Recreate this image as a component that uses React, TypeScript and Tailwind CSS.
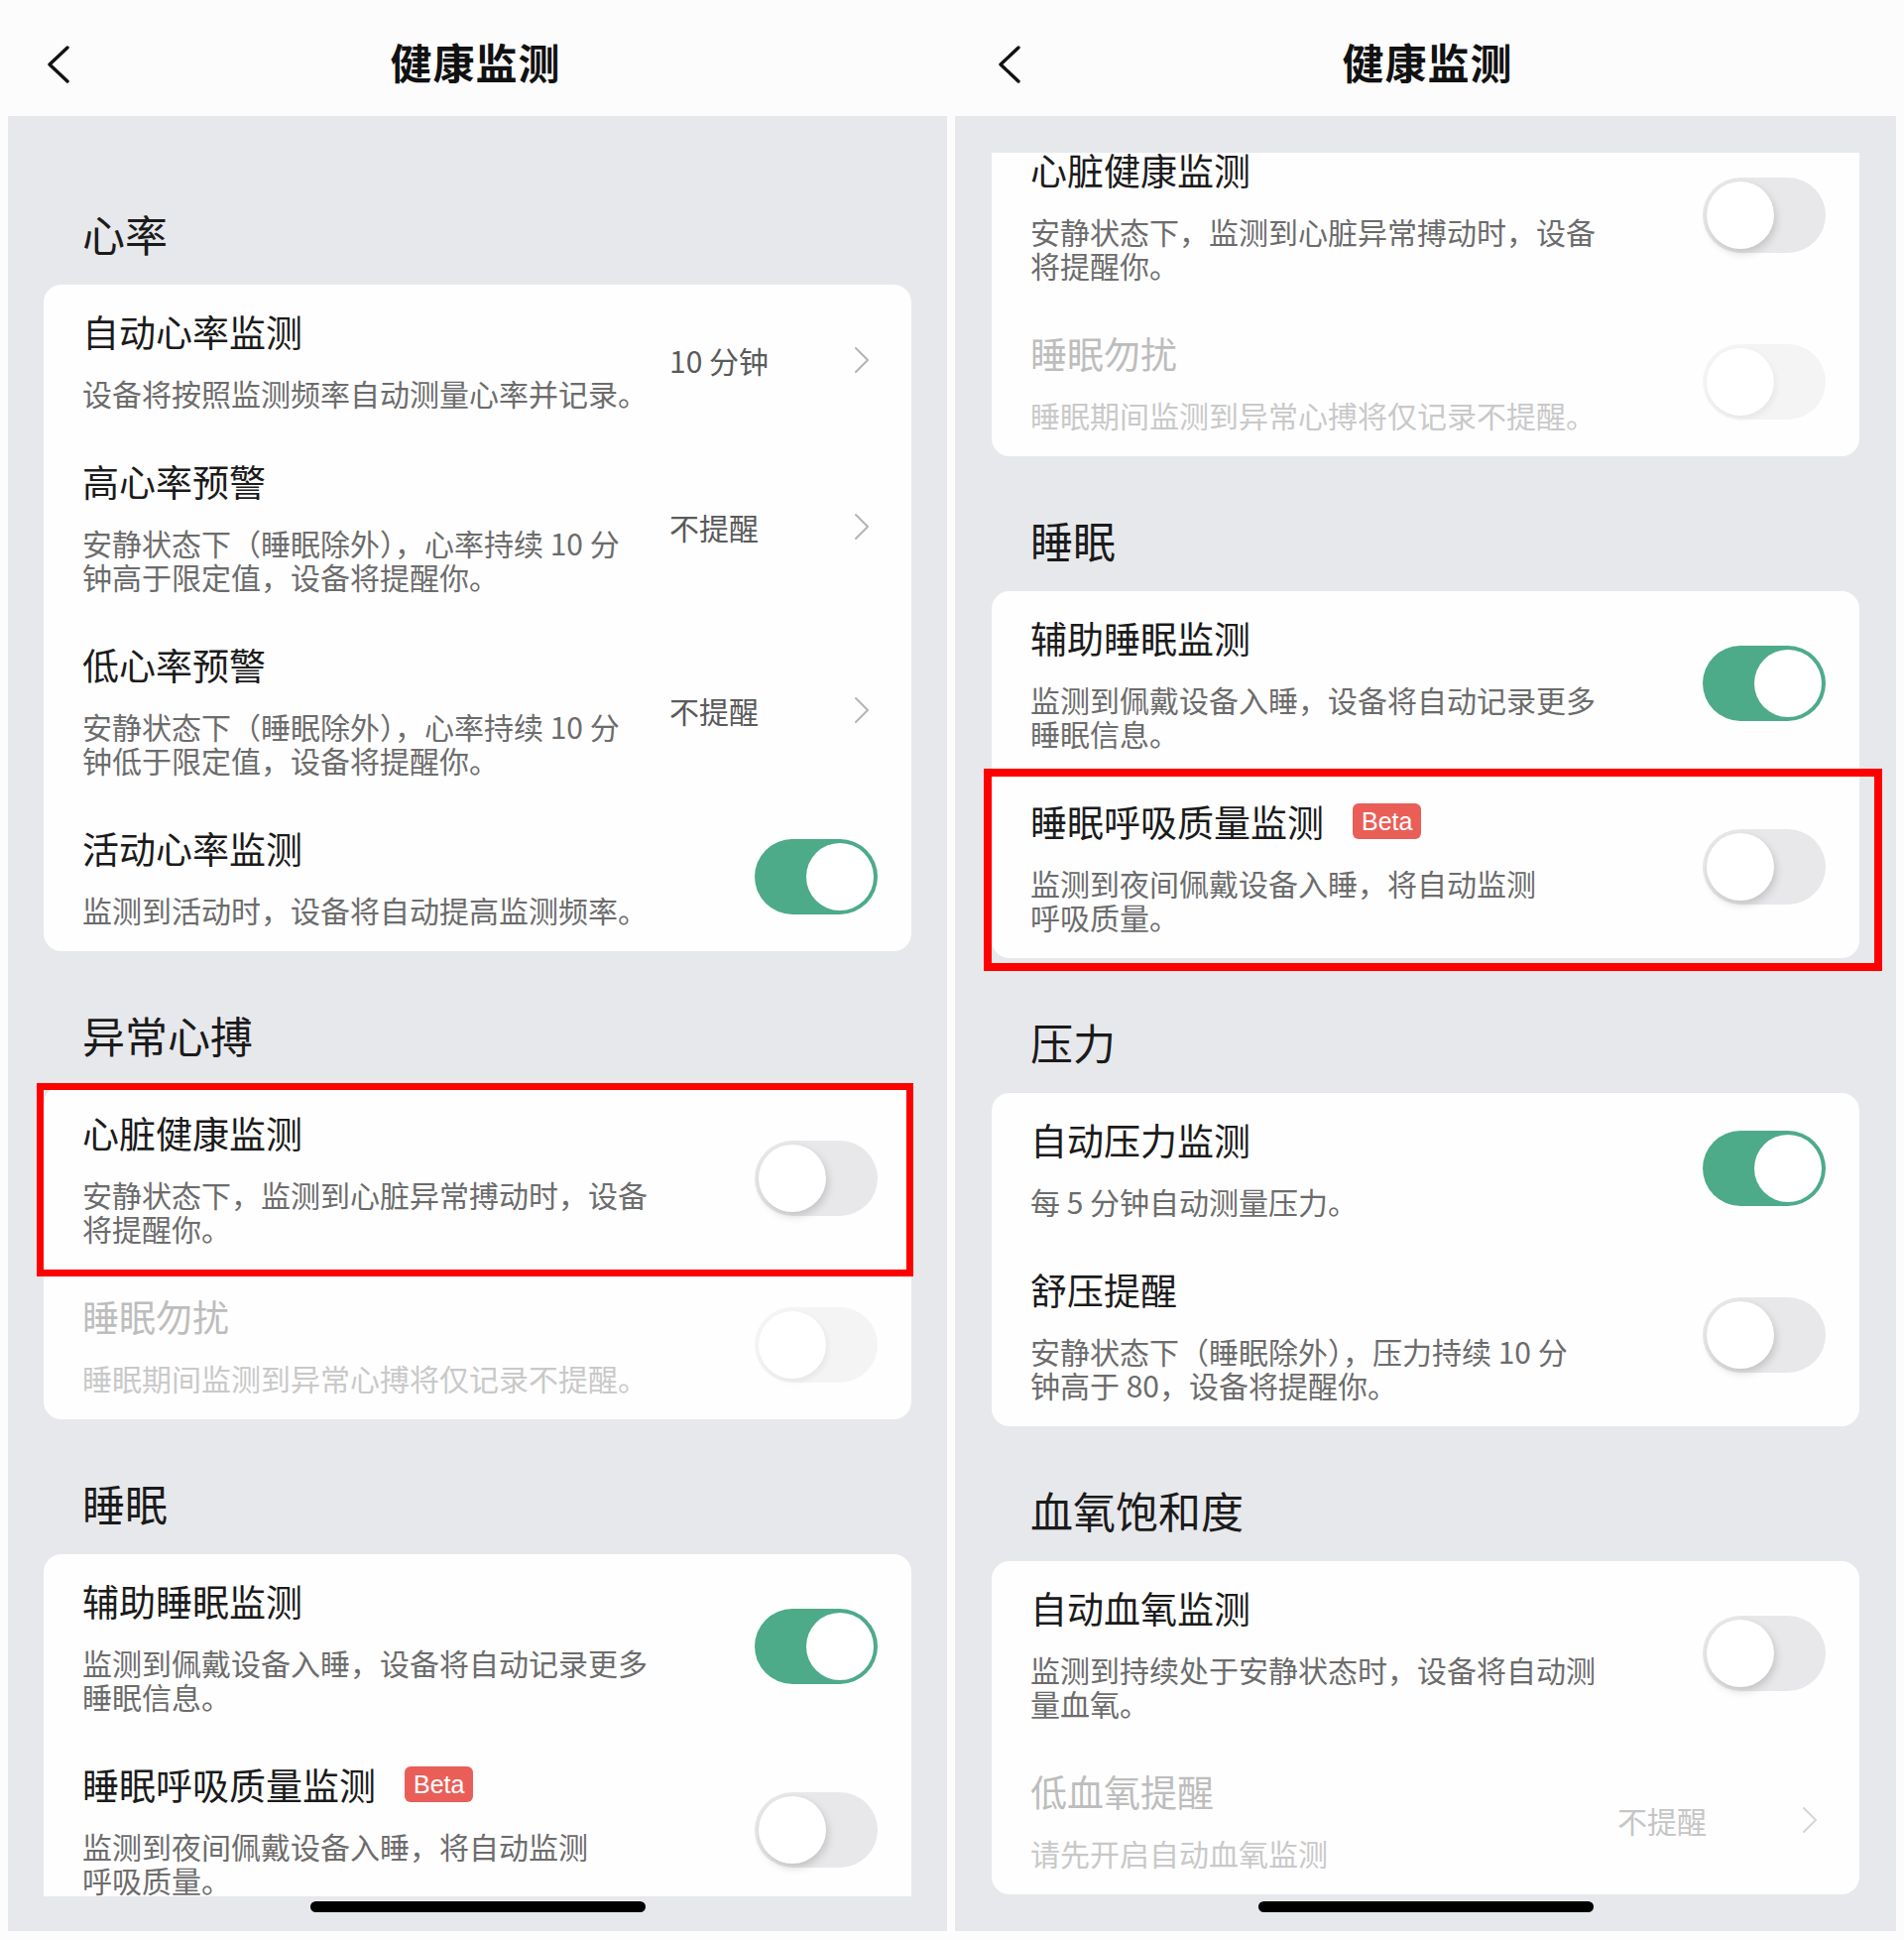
const font = { fontFamily: '"Noto Sans CJK SC", "Noto Sans", sans-serif' }

type Right = { kind: 'toggle'; on: boolean } | { kind: 'value'; text: string }

type Row = {
  title: string
  desc: string[]
  right: Right
  disabled?: boolean
  beta?: boolean
  mark?: 'left' | 'right'
}

type Block = { header?: string; rows: Row[] }

const heartRows: Row[] = [
  { title: '自动心率监测', desc: ['设备将按照监测频率自动测量心率并记录。'], right: { kind: 'value', text: '10 分钟' } },
  { title: '高心率预警', desc: ['安静状态下（睡眠除外），心率持续 10 分', '钟高于限定值，设备将提醒你。'], right: { kind: 'value', text: '不提醒' } },
  { title: '低心率预警', desc: ['安静状态下（睡眠除外），心率持续 10 分', '钟低于限定值，设备将提醒你。'], right: { kind: 'value', text: '不提醒' } },
  { title: '活动心率监测', desc: ['监测到活动时，设备将自动提高监测频率。'], right: { kind: 'toggle', on: true } },
]

const abnormalRows = (mark?: 'left'): Row[] => [
  { title: '心脏健康监测', desc: ['安静状态下，监测到心脏异常搏动时，设备', '将提醒你。'], right: { kind: 'toggle', on: false }, mark },
  { title: '睡眠勿扰', desc: ['睡眠期间监测到异常心搏将仅记录不提醒。'], right: { kind: 'toggle', on: false }, disabled: true },
]

const sleepRows = (mark?: 'right'): Row[] => [
  { title: '辅助睡眠监测', desc: ['监测到佩戴设备入睡，设备将自动记录更多', '睡眠信息。'], right: { kind: 'toggle', on: true } },
  { title: '睡眠呼吸质量监测', beta: true, desc: ['监测到夜间佩戴设备入睡，将自动监测', '呼吸质量。'], right: { kind: 'toggle', on: false }, mark },
]

const pressureRows: Row[] = [
  { title: '自动压力监测', desc: ['每 5 分钟自动测量压力。'], right: { kind: 'toggle', on: true } },
  { title: '舒压提醒', desc: ['安静状态下（睡眠除外），压力持续 10 分', '钟高于 80，设备将提醒你。'], right: { kind: 'toggle', on: false } },
]

const oxygenRows: Row[] = [
  { title: '自动血氧监测', desc: ['监测到持续处于安静状态时，设备将自动测', '量血氧。'], right: { kind: 'toggle', on: false } },
  { title: '低血氧提醒', desc: ['请先开启自动血氧监测'], right: { kind: 'value', text: '不提醒' }, disabled: true },
]

const leftBlocks: Block[] = [
  { header: '心率', rows: heartRows },
  { header: '异常心搏', rows: abnormalRows('left') },
  { header: '睡眠', rows: sleepRows() },
]

const rightBlocks: Block[] = [
  { rows: abnormalRows() },
  { header: '睡眠', rows: sleepRows('right') },
  { header: '压力', rows: pressureRows },
  { header: '血氧饱和度', rows: oxygenRows },
]

function Toggle({ on, disabled }: { on: boolean; disabled?: boolean }) {
  if (on) {
    return (
      <div className="relative w-[124px] h-[76px] rounded-full bg-[#4dab89] shrink-0">
        <div className="absolute top-[4px] right-[4px] w-[68px] h-[68px] rounded-full bg-white" />
      </div>
    )
  }
  return (
    <div className={`relative w-[124px] h-[76px] rounded-full shrink-0 ${disabled ? 'bg-[#f4f4f5]' : 'bg-[#e8e8ea]'}`}>
      <div
        className={`absolute top-[4px] left-[4px] w-[68px] h-[68px] rounded-full bg-white ${
          disabled ? 'shadow-[2px_3px_6px_rgba(0,0,0,0.06)]' : 'shadow-[2px_4px_8px_rgba(0,0,0,0.16)]'
        }`}
      />
    </div>
  )
}

function Chevron({ color }: { color: string }) {
  return (
    <svg width="16" height="28" viewBox="0 0 16 28" fill="none">
      <path d="M2 2 L14 14 L2 26" stroke={color} strokeWidth="2" strokeLinecap="round" strokeLinejoin="round" />
    </svg>
  )
}

function SettingRow({ row }: { row: Row }) {
  const titleColor = row.disabled ? 'text-[#bdbdbd]' : 'text-[#1b1b1b]'
  const descColor = row.disabled ? 'text-[#c9c9c9]' : 'text-[#6c6c6c]'
  return (
    <div className="relative flex items-center pl-[39px] pr-[34px] py-[25px]">
      <div className="flex-1">
        <div className={`flex items-center h-[44px] text-[37px] leading-[44px] ${titleColor}`}>
          <span>{row.title}</span>
          {row.beta && (
            <span className="ml-[29px] h-[36px] px-[9px] rounded-[6px] bg-[#e95f58] text-white text-[25px] leading-[36px]" style={{ fontFamily: '"Liberation Sans", Arial, sans-serif' }}>
              Beta
            </span>
          )}
        </div>
        <div className={`mt-[23px] text-[30px] leading-[34px] ${descColor}`}>
          {row.desc.map((line, i) => (
            <div key={i} className="whitespace-nowrap">{line}</div>
          ))}
        </div>
      </div>
      {row.right.kind === 'toggle' ? (
        <Toggle on={row.right.on} disabled={row.disabled} />
      ) : (
        <div className="w-[202px] mr-[8px] flex items-center justify-between">
          <span className={`text-[30px] leading-[40px] ${row.disabled ? 'text-[#c6c6c6]' : 'text-[#5a5a5a]'}`}>{row.right.text}</span>
          <Chevron color={row.disabled ? '#d6d6d6' : '#b4b4b4'} />
        </div>
      )}
      {row.mark === 'left' && (
        <span className="absolute top-[-3px] bottom-[-7px] left-[-7px] right-[-2px] border-[7px] border-[#ff0000] pointer-events-none" />
      )}
      {row.mark === 'right' && (
        <span className="absolute top-[-6px] bottom-[-13px] left-[-8px] right-[-23px] border-[8px] border-[#ff0000] pointer-events-none" />
      )}
    </div>
  )
}

function Blocks({ blocks }: { blocks: Block[] }) {
  return (
    <div>
      {blocks.map((b, i) => (
        <div key={i}>
          {b.header && (
            <div className="mt-[58px] mb-[26px] pl-[39px] h-[52px] text-[43px] leading-[52px] text-[#1b1b1b]">{b.header}</div>
          )}
          <div className="bg-[#fefefe] rounded-[18px]">
            {b.rows.map((r, j) => (
              <SettingRow key={j} row={r} />
            ))}
          </div>
        </div>
      ))}
    </div>
  )
}

function Header() {
  return (
    <div className="relative h-[117px] flex items-center justify-center">
      <svg className="absolute left-[46px] top-[46px]" width="26" height="38" viewBox="0 0 26 38" fill="none">
        <path d="M22 2 L4 19 L22 36" stroke="#111" strokeWidth="3.4" strokeLinecap="round" strokeLinejoin="round" />
      </svg>
      <span className="text-[42px] font-bold text-[#111] tracking-[1px] mt-[6px]">健康监测</span>
    </div>
  )
}

function HomeBar() {
  return <div className="absolute bottom-[19px] left-1/2 -translate-x-1/2 w-[338px] h-[11px] rounded-full bg-black" />
}

export default function App() {
  return (
    <div className="flex w-[1920px] h-[1956px] bg-[#fcfcfc] overflow-hidden" style={font}>
      {/* Left screen */}
      <div className="w-[959px] flex flex-col">
        <Header />
        <div className="relative ml-[8px] mr-[4px] h-[1830px] bg-[#e7e8eb]">
          <div className="h-[1795px] overflow-hidden px-[36px] pt-[34px]">
            <Blocks blocks={leftBlocks} />
          </div>
          <HomeBar />
        </div>
      </div>

      {/* Right screen, scrolled so the first card is cut at the top */}
      <div className="w-[961px] flex flex-col">
        <Header />
        <div className="relative ml-[4px] mr-[8px] h-[1830px] bg-[#e7e8eb] pt-[37px]">
          <div className="h-[1758px] overflow-hidden px-[37px]">
            <div className="mt-[-30px]">
              <Blocks blocks={rightBlocks} />
            </div>
          </div>
          <HomeBar />
        </div>
      </div>
    </div>
  )
}
